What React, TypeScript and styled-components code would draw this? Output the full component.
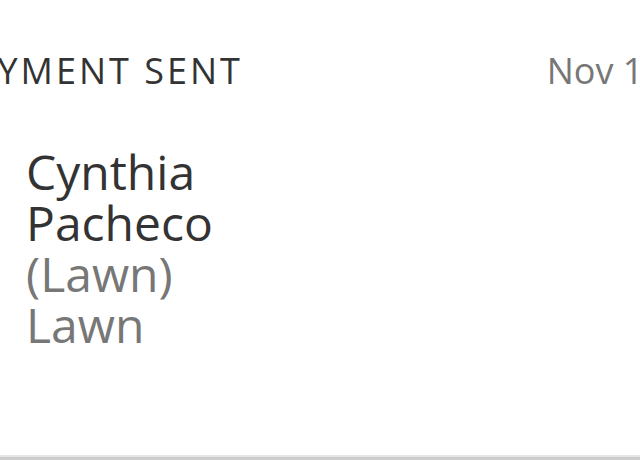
import styled, { createGlobalStyle } from "styled-components";

const GlobalStyle = createGlobalStyle`
  html, body {
    margin: 0;
    padding: 0;
    background: #ffffff;
    overflow: hidden;
  }
  body {
    font-family: "Open Sans", "Noto Sans", sans-serif;
  }
`;

function App() {
  return (
    <Page>
      <GlobalStyle />
      <Card>
        <Header>
          <Title>Payment Sent</Title>
          <DateText>Nov 12</DateText>
        </Header>
        <Body>
          <Name>Cynthia Pacheco</Name>
          <Detail>(Lawn)</Detail>
          <Detail>Lawn</Detail>
        </Body>
      </Card>
    </Page>
  );
}

export default App;

const Page = styled.div`
  width: 640px;
  height: 460px;
  overflow: hidden;
`;

const Card = styled.div`
  display: flex;
  flex-direction: column;
  height: 460px;
  box-sizing: border-box;
  border-bottom: 3px solid #cccccc;
  box-shadow: inset 0 -5px 0 -3px #e6e6e6;
`;

const Header = styled.div`
  display: flex;
  justify-content: space-between;
  align-items: baseline;
  margin: 0 -24px 0 -53px;
  padding-top: 46px;
`;

const Title = styled.div`
  font-size: 36px;
  letter-spacing: 3px;
  text-transform: uppercase;
  color: #333333;
`;

const DateText = styled.div`
  font-size: 36px;
  color: #777777;
`;

const Body = styled.div`
  display: flex;
  flex-direction: column;
  width: 230px;
  padding: 51px 0 0 26px;
  font-size: 48px;
  line-height: 51px;
`;

const Name = styled.div`
  color: #333333;
`;

const Detail = styled.div`
  color: #777777;
`;
